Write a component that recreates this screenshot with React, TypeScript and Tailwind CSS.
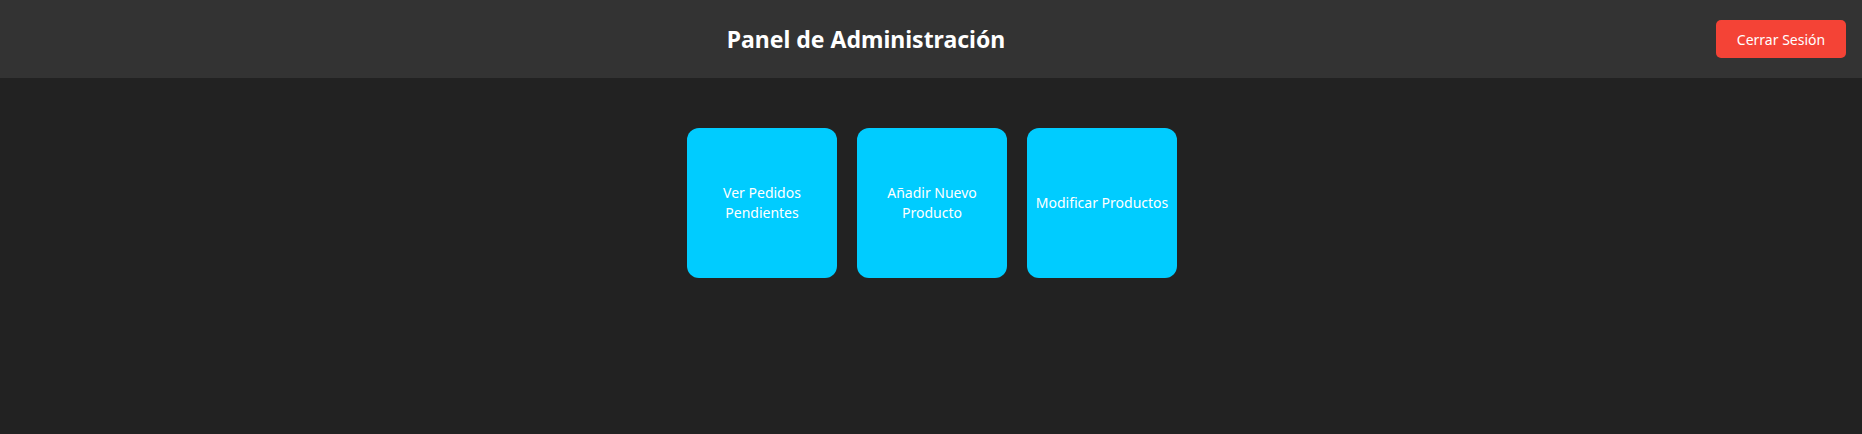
const font = '[font-family:"Comic_Sans_MS","Noto_Sans","DejaVu_Sans",sans-serif]';

const cards = ['Ver Pedidos Pendientes', 'Añadir Nuevo Producto', 'Modificar Productos'];

export default function App() {
  return (
    <div className={`min-h-screen bg-[#222222] text-white ${font}`}>
      <header className="flex h-[78px] items-center bg-[#333333] px-4">
        <h1 className="flex-1 text-center text-[23px] font-bold">Panel de Administración</h1>
        <button className="h-[38px] w-[130px] rounded-[5px] bg-[#f44336] text-[14px] text-white">
          Cerrar Sesión
        </button>
      </header>
      <main className="flex justify-center gap-5 pl-[2px] pt-[50px]">
        {cards.map((label) => (
          <button
            key={label}
            className="flex h-[150px] w-[150px] items-center justify-center rounded-xl bg-[#00ccff] px-1 text-center text-[14px] leading-5 text-white"
          >
            {label}
          </button>
        ))}
      </main>
    </div>
  );
}
